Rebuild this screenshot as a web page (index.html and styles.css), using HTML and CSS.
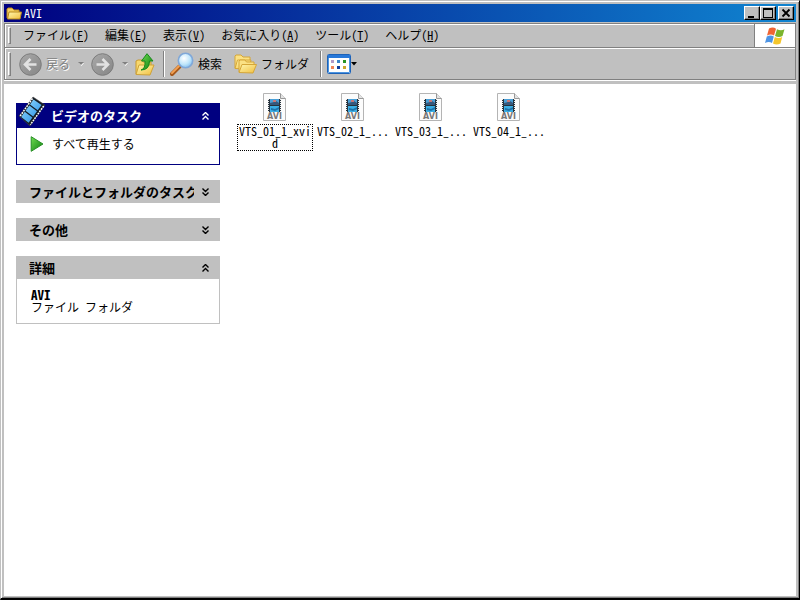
FILE: index.html
```
<!DOCTYPE html>
<html lang="ja">
<head>
<meta charset="utf-8">
<title>AVI</title>
<link rel="stylesheet" href="styles.css">
</head>
<body>
<svg class="defs" aria-hidden="true">
  <defs>
    <linearGradient id="folder" x1="0" y1="0" x2="1" y2="1"><stop offset="0" stop-color="#fff7b0"/><stop offset="1" stop-color="#f0bd3c"/></linearGradient>
    <linearGradient id="disc" x1="0" y1="0" x2="1" y2="1"><stop offset="0" stop-color="#aaa"/><stop offset="1" stop-color="#858585"/></linearGradient>
    <linearGradient id="green" x1="0" y1="0" x2="1" y2="1"><stop offset="0" stop-color="#6fdc50"/><stop offset="1" stop-color="#0c7d10"/></linearGradient>
    <radialGradient id="lens" cx=".4" cy=".35" r=".7"><stop offset="0" stop-color="#fff"/><stop offset=".6" stop-color="#bfe6fb"/><stop offset="1" stop-color="#7fbdf0"/></radialGradient>
    <linearGradient id="film" x1="0" y1="0" x2="1" y2="1"><stop offset="0" stop-color="#9fe2ff"/><stop offset="1" stop-color="#1a86e4"/></linearGradient>
    <symbol id="avi" viewBox="0 0 24 28">
      <path d="M.5.5h17l5 5v22H.5z" fill="#fcfcfc" stroke="#b4b4b4"/>
      <path d="M17.500.5v5h5" fill="#e4e4e4" stroke="#999"/>
      <path d="M5 6h13v13H5z" fill="#26323c"/>
      <path d="M7 6h9v6H7z" fill="#4aa0d8"/><path d="M7 13h9v6H7z" fill="#3aaee4"/>
      <path d="M7 10l4-1 2-1 3 2v2H7z" fill="#36587c"/><path d="M10 7h3v2h-3z" fill="#c67878"/><path d="M8 15l4 1 4-2v2l-4 2-4-1z" fill="#1e72a8"/>
      <path d="M5.500 6v13M17.500 6v13" stroke="#eee" stroke-dasharray="1 1"/>
      <text x="11.500" y="26" text-anchor="middle" class="badge">AVI</text>
    </symbol>
    <symbol id="chev" viewBox="0 0 7 8"><path d="M.5 3.500l3-3 3 3M.5 7.500l3-3 3 3" fill="none" stroke="currentColor" stroke-width="1.400"/></symbol>
  </defs>
</svg>
<div class="window">
  <header class="titlebar">
    <svg class="title-icon" viewBox="0 0 16 13"><path d="M1 11V2l1-1h4l2 2h5v2" fill="#f4cf62" stroke="#b98a1c"/><path d="M1.500 12L3 5h12.500L14 12z" fill="url(#folder)" stroke="#b98a1c"/></svg>
    <h1>AVI</h1>
    <div class="controls">
      <button aria-label="最小化"><svg viewBox="0 0 12 10"><path d="M2 8h6v2H2z"/></svg></button>
      <button aria-label="最大化"><svg viewBox="0 0 12 10"><path d="M1 0h10v10H1zm1 2v7h8V2z" fill-rule="evenodd"/></svg></button>
      <button class="close" aria-label="閉じる"><svg viewBox="0 0 12 10"><path d="M2.500 1.500l7 7m0-7l-7 7" stroke="#000" stroke-width="1.800"/></svg></button>
    </div>
  </header>
  <div class="bars">
    <div class="menu-row">
      <nav class="menubar">
        <span class="grip"></span>
        <button>ファイル(<u>F</u>)</button>
        <button>編集(<u>E</u>)</button>
        <button>表示(<u>V</u>)</button>
        <button>お気に入り(<u>A</u>)</button>
        <button>ツール(<u>T</u>)</button>
        <button>ヘルプ(<u>H</u>)</button>
      </nav>
      <div class="flag">
        <svg viewBox="0 0 20 18"><path d="M4 1.500q4-2 7 .2L9 8.500q-3-2-7 0z" fill="#ef6534"/><path d="M12 2.200q4 2 7.500 0L17.500 9q-3.500 2-7.500 0z" fill="#7ab42c"/><path d="M1.800 9.500q4-2 7 0L7 16q-3-2-7 0z" fill="#4d94e4"/><path d="M9.800 10q4 2 7.400 0L15.500 16.500q-4 2-7.500 0z" fill="#f4c62c"/></svg>
      </div>
    </div>
    <div class="toolbar">
      <span class="grip"></span>
      <button class="tool back" disabled>
        <svg class="round" viewBox="0 0 23 23"><circle cx="11.500" cy="11.500" r="10.800" fill="url(#disc)" stroke="#7c7c7c"/><path d="M17.500 11.500H6m5.500-5.500L6 11.500l5.500 5.500" fill="none" stroke="#e2e2e2" stroke-width="2.600"/></svg>
        <span>戻る</span>
      </button>
      <button class="drop" disabled aria-label="戻る履歴"><svg viewBox="0 0 6 4"><path d="M1 1h5L3.500 4z" fill="#fff"/><path d="M0 0h6L3 3z" fill="#808080"/></svg></button>
      <button class="tool forward" disabled aria-label="進む"><svg class="round" viewBox="0 0 23 23"><circle cx="11.500" cy="11.500" r="10.800" fill="url(#disc)" stroke="#7c7c7c"/><path d="M5.500 11.500H17M11.500 6l5.500 5.500-5.500 5.500" fill="none" stroke="#e2e2e2" stroke-width="2.600"/></svg></button>
      <button class="drop" disabled aria-label="進む履歴"><svg viewBox="0 0 6 4"><path d="M1 1h5L3.500 4z" fill="#fff"/><path d="M0 0h6L3 3z" fill="#808080"/></svg></button>
      <button class="tool up" aria-label="上へ">
        <svg viewBox="0 0 20 23"><path d="M1 21V8l2-1h4l1 2h8v3" fill="#f7d76d" stroke="#c99b2e"/><path d="M1 21.500L4 12h15l-4 10z" fill="url(#folder)" stroke="#cfa238"/><path d="M6 17q4.500-1 4-9H6.500L12 .7 18 8h-3.500q0 9-8.500 9z" fill="url(#green)" stroke="#168a1a"/></svg>
      </button>
      <span class="separator"></span>
      <button class="tool search">
        <svg viewBox="0 0 24 24"><path d="M2 22l7.500-7.500" stroke="#a4581c" stroke-width="4" stroke-linecap="round"/><path d="M2 21l7-7" stroke="#f2a052" stroke-width="2" stroke-linecap="round"/><circle cx="15.500" cy="8.500" r="7.200" fill="url(#lens)" stroke="#80a8d8" stroke-width="1.600"/></svg>
        <span>検索</span>
      </button>
      <button class="tool folders">
        <svg viewBox="0 0 23 20"><path d="M1 14V2l1-1h5l2 2h7v3" fill="#fbe184" stroke="#d5a638"/><path d="M1 14.500L3.500 6H17l-2 9z" fill="url(#folder)" stroke="#d5a638"/><path d="M5 18V7l1-1h5l1.500 2H20v3" fill="#fbe184" stroke="#d5a638"/><path d="M5 18.500L8 10.500h14.500L19 19z" fill="url(#folder)" stroke="#d5a638"/></svg>
        <span>フォルダ</span>
      </button>
      <span class="separator wide"></span>
      <button class="tool views" aria-label="表示">
        <svg class="grid-icon" viewBox="0 0 24 20"><rect x=".5" y=".5" width="23" height="19" rx="1" fill="#fff" stroke="#1c62b8"/><path d="M1 1h22v3H1z" fill="#2878d8"/><path d="M1.500 4v14.500h21V4" fill="none" stroke="#4c94e0"/><path d="M4 6h3v3H4z" fill="#b29ac8"/><path d="M10 6h3v3h-3z" fill="#3c86cc"/><path d="M16 6h3v3h-3z" fill="#299424"/><path d="M4 12h3v3H4z" fill="#f08458"/><path d="M10 12h3v3h-3z" fill="#103c9c"/><path d="M16 12h3v3h-3z" fill="#cba72c"/></svg>
        <svg class="arrow" viewBox="0 0 6 4"><path d="M0 0h6L3 3.500z"/></svg>
      </button>
    </div>
  </div>
  <div class="content">
    <aside>
      <section class="panel primary">
        <h2><svg class="film" viewBox="0 0 28 31"><path d="M15 1l12 8-15 21L1 20z" fill="#141c24" stroke="#444" stroke-width=".6"/><path d="M15.500 3.500l8 5.500-3.800 5.300-7.700-5.800zM11.300 9.500l7.700 5.800-3.800 5.200-7.700-5.800zM6.700 15.800l7.700 5.700-3.800 5.200-7.400-5.800z" fill="url(#film)"/><path d="M14.500 2.500L2.200 20M25.700 10L12.300 28.800" stroke="#fff" stroke-width="1.500" stroke-dasharray="1.800 1"/></svg><button><span>ビデオのタスク</span><svg class="chevron"><use href="#chev"/></svg></button></h2>
        <div class="panel-body"><a href="#play"><svg class="play" viewBox="0 0 13 16"><path d="M.7.7L12.500 8 .7 15.300z" fill="url(#green)" stroke="#278f25"/></svg>すべて再生する</a></div>
      </section>
      <section class="panel"><h2><button><span>ファイルとフォルダのタスク</span><svg class="chevron down"><use href="#chev"/></svg></button></h2></section>
      <section class="panel"><h2><button><span>その他</span><svg class="chevron down"><use href="#chev"/></svg></button></h2></section>
      <section class="panel">
        <h2><button><span>詳細</span><svg class="chevron"><use href="#chev"/></svg></button></h2>
        <div class="panel-body details"><strong>AVI</strong><p>ファイル フォルダ</p></div>
      </section>
    </aside>
    <main>
      <button class="file focused"><svg><use href="#avi"/></svg><span>VTS_01_1_xvid</span></button>
      <button class="file"><svg><use href="#avi"/></svg><span>VTS_02_1_...</span></button>
      <button class="file"><svg><use href="#avi"/></svg><span>VTS_03_1_...</span></button>
      <button class="file"><svg><use href="#avi"/></svg><span>VTS_04_1_...</span></button>
    </main>
  </div>
</div>
</body>
</html>
```
FILE: styles.css
```
* { box-sizing: border-box; }
body {
  margin: 0;
  background: #c0c0c0;
  color: #000;
  font: 12px/16px "Noto Sans CJK JP", sans-serif;
  font-feature-settings: "hwid";
}
svg { display: block; flex: none; }
.defs { position: absolute; width: 0; height: 0; }
button {
  margin: 0;
  padding: 0;
  border: 0;
  background: none;
  color: inherit;
  font: inherit;
  font-feature-settings: inherit;
}
h1, h2, p { margin: 0; font-size: inherit; font-weight: inherit; }

.window {
  display: flex;
  flex-direction: column;
  min-height: 100vh;
  padding: 3px 3px 2px 3px;
  background: #c0c0c0;
  border: 1px solid #c0c0c0;
  border-right: 1px solid #000;
  border-bottom: 2px solid #000;
  box-shadow: inset 1px 1px #fff, inset -1px -1px #808080;
}

.titlebar {
  display: flex;
  align-items: center;
  height: 18px;
  padding: 0 2px;
  background: linear-gradient(90deg, #000080, #1084d0);
  color: #fff;
}
.title-icon { width: 16px; height: 13px; margin-right: 2px; }
.titlebar h1 { flex: 1; }
.controls { display: flex; }
.controls button {
  width: 16px;
  height: 14px;
  padding: 1px;
  background: #c0c0c0;
  border: 1px solid;
  border-color: #fff #000 #000 #fff;
  box-shadow: inset -1px -1px #808080;
}
.controls svg { width: 12px; height: 10px; }
.controls .close { margin-left: 2px; }

.bars {
  margin-top: 1px;
  border: 1px solid #808080;
  box-shadow: inset 1px 1px #fff, 0 1px #fff;
}
.menu-row {
  display: flex;
  height: 24px;
  border-bottom: 1px solid #808080;
}
.menubar { display: flex; align-items: center; flex: 1; gap: 16px; padding-left: 3px; }
.grip {
  width: 3px;
  align-self: stretch;
  margin: 3px 0;
  border: 1px solid;
  border-color: #fff #808080 #808080 #fff;
}
.menubar .grip { margin-right: -4px; }
.menubar button { line-height: 14px; padding-bottom: 2px; }
.flag {
  display: flex;
  align-items: center;
  justify-content: center;
  width: 41px;
  background: #fff;
  border-left: 1px solid #808080;
}
.flag svg { width: 20px; height: 18px; }

.toolbar {
  display: flex;
  align-items: center;
  height: 31px;
  padding-left: 3px;
  border-top: 1px solid #fff;
}
.tool { display: flex; align-items: center; }
.round { width: 23px; height: 23px; }
.back { gap: 4px; margin-left: 8px; }
.back:disabled { color: #808080; text-shadow: 1px 1px #fff; }
.drop { width: 21px; height: 23px; padding-left: 8px; }
.drop svg { width: 6px; height: 4px; }
.up svg { width: 20px; height: 23px; }
.separator {
  width: 2px;
  align-self: stretch;
  margin: 2px 5px 2px 8px;
  border-left: 1px solid #808080;
  border-right: 1px solid #fff;
}
.wide { margin-left: 11px; }
.search { gap: 4px; }
.search svg { width: 24px; height: 24px; }
.folders { gap: 4px; margin-left: 12px; }
.folders svg { width: 23px; height: 20px; }
.grid-icon { width: 24px; height: 20px; }
.arrow { width: 6px; height: 4px; }

.content { display: flex; flex: 1; margin-top: 4px; background: #fff; }
aside {
  display: flex;
  flex-direction: column;
  gap: 15px;
  width: 216px;
  padding: 19px 0 19px 12px;
}
.panel h2 { position: relative; background: #c0c0c0; }
.panel h2 button {
  display: flex;
  align-items: center;
  width: 100%;
  height: 23px;
  padding: 0 11px 0 13px;
  font-size: 13px;
  font-weight: bold;
  line-height: 22px;
  text-align: left;
}
.panel h2 span { flex: 1; overflow: hidden; white-space: nowrap; }
.chevron { width: 7px; height: 8px; margin-left: 8px; }
.down { transform: scaleY(-1); }
.panel-body { border: 1px solid #c0c0c0; border-top: 0; }
.primary h2 { background: #000080; color: #fff; }
.primary h2 button { height: 25px; padding-left: 35px; }
.film { position: absolute; left: 2px; bottom: 1px; width: 28px; height: 31px; }
.primary .panel-body { padding: 8px 13px 12px; border-color: #000080; }
.panel-body a { display: flex; align-items: center; gap: 8px; color: inherit; text-decoration: none; }
.play { width: 14px; height: 16px; }
.details { padding: 9px 14px 10px; line-height: 12px; }
.details strong { display: block; font-size: 13px; line-height: 13px; }

main { display: flex; flex: 1; flex-wrap: wrap; align-content: flex-start; align-items: flex-start; gap: 2px; padding: 9px 0 0 17px; }
.file { display: flex; flex-direction: column; align-items: center; width: 76px; gap: 3px; line-height: 12px; }
.file svg { width: 24px; height: 28px; }
.file span {
  width: 76px;
  padding-bottom: 1px;
  border: 1px solid transparent;
  word-break: break-all;
}
.file.focused span { border: 1px dotted #000; }
.badge { font: bold 8px "DejaVu Sans", sans-serif; fill: #777; }
```
